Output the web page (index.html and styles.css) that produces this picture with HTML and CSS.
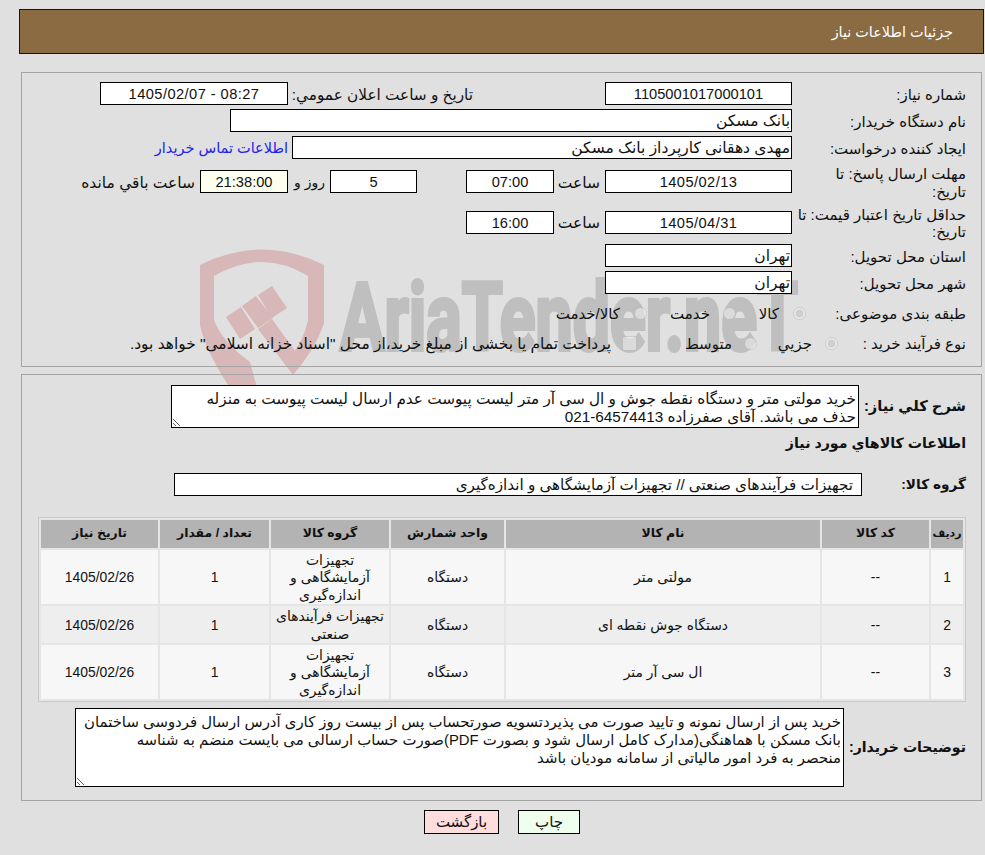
FILE: index.html
```html
<!DOCTYPE html>
<html lang="fa" dir="rtl">
<head>
<meta charset="utf-8">
<title>جزئیات اطلاعات نیاز</title>
<link rel="stylesheet" href="styles.css">
</head>
<body>
<svg class="watermark" viewBox="0 0 985 855" width="985" height="855" aria-hidden="true">
  <path class="wm-shield" d="M200 265 Q262 234 324 265 L324 323 Q316 348 293 375 L286 362 Q304 342 308 320 L308 276 Q262 248 214 276 L214 320 Q222 342 250 362 L257 388 L230 388 Q205 350 200 325 Z"/>
  <path class="wm-shield" d="M226 317 L241 307 L255 329 L240 339 Z M242 306 L256 296 L273 318 L258 328 Z M258 295 L272 286 L287 308 L272 318 Z M258 329 L272 319 L298 355 L293 375 Z"/>
  <text class="wm-text" x="340" y="350" textLength="458" lengthAdjust="spacingAndGlyphs">AriaTender.neT</text>
</svg>

<header class="title-bar">جزئیات اطلاعات نیاز</header>

<section class="panel panel-info">
  <div class="row row-h23">
    <div class="label">شماره نیاز:</div>
    <div class="field w187 center num" dir="ltr">1105001017000101</div>
    <div class="label label-announce">تاریخ و ساعت اعلان عمومي:</div>
    <div class="field w188 center num spaced" dir="ltr">1405/02/07 - 08:27</div>
  </div>
  <div class="row row-h23">
    <div class="label">نام دستگاه خریدار:</div>
    <div class="field w562">بانک مسکن</div>
  </div>
  <div class="row row-h23">
    <div class="label">ایجاد کننده درخواست:</div>
    <div class="field w500">مهدی دهقانی کارپرداز بانک مسکن</div>
    <a class="contact" href="#">اطلاعات تماس خریدار</a>
  </div>
  <div class="row row-h37">
    <div class="label">مهلت ارسال پاسخ: تا<br>تاریخ:</div>
    <div class="field w187 center num spaced" dir="ltr">1405/02/13</div>
    <div class="time-label">ساعت</div>
    <div class="field w88 center num" dir="ltr">07:00</div>
    <div class="field w87 center num days">5</div>
    <div class="days-label">روز و</div>
    <div class="field w88 center num remain" dir="ltr">21:38:00</div>
    <div class="remain-label">ساعت باقي مانده</div>
  </div>
  <div class="row row-h36">
    <div class="label">حداقل تاریخ اعتبار قیمت: تا<br>تاریخ:</div>
    <div class="field w187 center num spaced" dir="ltr">1405/04/31</div>
    <div class="time-label">ساعت</div>
    <div class="field w88 center num" dir="ltr">16:00</div>
  </div>
  <div class="row row-h23">
    <div class="label">استان محل تحویل:</div>
    <div class="field w187">تهران</div>
  </div>
  <div class="row row-h23">
    <div class="label">شهر محل تحویل:</div>
    <div class="field w187">تهران</div>
  </div>
  <div class="row row-h30">
    <div class="label label-cat">طبقه بندی موضوعی:</div>
    <label class="choice c-kala"><input type="radio" name="cat" checked disabled><span>کالا</span></label>
    <label class="choice c-khedmat"><input type="radio" name="cat" disabled><span>خدمت</span></label>
    <label class="choice c-both"><input type="radio" name="cat" disabled><span>کالا/خدمت</span></label>
  </div>
  <div class="row row-h22">
    <div class="label label-process">نوع فرآیند خرید :</div>
    <label class="choice c-small"><input type="radio" name="proc" checked disabled><span>جزيي</span></label>
    <label class="choice c-medium"><input type="radio" name="proc" disabled><span>متوسط</span></label>
    <label class="choice c-pay"><input type="checkbox" disabled><span>پرداخت تمام یا بخشی از مبلغ خرید،از محل "اسناد خزانه اسلامی" خواهد بود.</span></label>
  </div>
</section>

<section class="panel panel-goods">
  <div class="desc-row">
    <div class="label-bold desc-label">شرح کلي نیاز:</div>
    <textarea class="area area-need" readonly>خرید مولتی متر و دستگاه نقطه جوش و ال سی آر متر لیست پیوست عدم ارسال لیست پیوست به منزله
حذف می باشد. آقای صفرزاده 64574413-021</textarea>
  </div>
  <h2 class="goods-title">اطلاعات کالاهاي مورد نیاز</h2>
  <div class="group-row">
    <div class="label-bold group-label">گروه کالا:</div>
    <div class="field group-field">تجهیزات فرآیندهای صنعتی // تجهیزات آزمایشگاهی و اندازه‌گیری</div>
  </div>
  <table class="goods">
    <colgroup>
      <col class="col-1"><col class="col-2"><col class="col-3"><col class="col-4"><col class="col-5"><col class="col-6"><col class="col-7">
    </colgroup>
    <thead>
      <tr><th>ردیف</th><th>کد کالا</th><th>نام کالا</th><th>واحد شمارش</th><th>گروه کالا</th><th>تعداد / مقدار</th><th>تاریخ نیاز</th></tr>
    </thead>
    <tbody>
      <tr><td>1</td><td>--</td><td>مولتی متر</td><td>دستگاه</td><td>تجهیزات آزمایشگاهی و اندازه‌گیری</td><td>1</td><td>1405/02/26</td></tr>
      <tr><td>2</td><td>--</td><td>دستگاه جوش نقطه ای</td><td>دستگاه</td><td>تجهیزات فرآیندهای صنعتی</td><td>1</td><td>1405/02/26</td></tr>
      <tr><td>3</td><td>--</td><td>ال سی آر متر</td><td>دستگاه</td><td>تجهیزات آزمایشگاهی و اندازه‌گیری</td><td>1</td><td>1405/02/26</td></tr>
    </tbody>
  </table>
  <div class="notes-row">
    <div class="label-bold notes-label">توضیحات خریدار:</div>
    <textarea class="area area-notes" readonly>خرید پس از ارسال نمونه و تایید صورت می پذیردتسویه صورتحساب پس از بیست روز کاری آدرس ارسال فردوسی ساختمان
بانک مسکن با هماهنگی(مدارک کامل ارسال شود و بصورت PDF)صورت حساب ارسالی می بایست منضم به شناسه
منحصر به فرد امور مالیاتی از سامانه مودیان باشد</textarea>
  </div>
</section>

<div class="actions">
  <button class="btn btn-print" type="button">چاپ</button>
  <button class="btn btn-back" type="button">بازگشت</button>
</div>
</body>
</html>
```
FILE: styles.css
```css
* { box-sizing: border-box; }
html { background: #e0e0e0; }
body {
  margin: 0;
  height: 855px;
  overflow: hidden;
  position: relative;
  font-family: "Liberation Sans", "DejaVu Sans", sans-serif;
  font-size: 15px;
  line-height: 17.4px;
  color: #111;
}
.watermark { position: absolute; left: 0; top: 0; z-index: -1; }
.wm-shield { fill: #d7b7b7; }
.wm-text {
  font-family: Roboto, sans-serif;
  font-weight: 700;
  font-size: 94px;
  fill: #bfbfbf;
  stroke: #bfbfbf;
  stroke-width: 4px;
  direction: ltr;
}
.title-bar {
  width: 965px;
  height: 45px;
  margin-top: 9px;
  margin-inline-start: 1px;
  padding: 2px 30px 0;
  background: #8b6b42;
  border: 1px solid #1c1407;
  color: #fff;
  font-size: 14.4px;
  display: flex;
  align-items: center;
}
.panel {
  width: 961px;
  margin-inline-start: 3px;
  border: 1px solid #a4a4a4;
}
.panel-info {
  margin-top: 18px;
  height: 295px;
  padding: 9px 15px 0 0;
  display: flex;
  flex-direction: column;
  gap: 4px;
}
.panel-goods {
  margin-top: 7px;
  height: 427px;
  padding: 10px 15px 0 15px;
}
.row { display: flex; align-items: center; }
.row-h23 { height: 23px; }
.row-h37 { height: 37px; }
.row-h36 { height: 36px; }
.row-h30 { height: 30px; }
.row-h22 { height: 22px; }
.label { width: 174px; flex: none; padding-top: 2px; white-space: nowrap; }
.field {
  height: 23px;
  flex: none;
  border: 1px solid #000;
  background: #fff;
  padding: 1px 1px 0;
  font-size: 15.5px;
  line-height: 20px;
  white-space: nowrap;
}
.num { font-size: 14.67px; }
.spaced { letter-spacing: .43px; }
.center { text-align: center; }
.w187 { width: 187px; }
.w188 { width: 188px; }
.w88 { width: 88px; }
.w87 { width: 87px; }
.w500 { width: 500px; }
.w562 { width: 562px; }
.label-announce { margin-inline-start: 132px; width: 185px; font-size: 15.3px; }
.contact { margin-inline-start: 4px; padding-top: 2px; color: #2222ee; font-size: 14.5px; text-decoration: none; }
.time-label { width: 51px; padding-top: 2px; padding-inline-start: 5px; font-size: 15.5px; }
.days { margin-inline-start: 49px; }
.days-label { width: 42px; padding-top: 2px; padding-inline-start: 5px; font-size: 14px; }
.remain { background: #fffff0; }
.remain-label { padding-top: 2px; padding-inline-start: 5px; font-size: 15.5px; white-space: nowrap; }
.choice { display: flex; align-items: center; white-space: nowrap; flex: none; }
.choice span { padding-top: 2px; }
.choice input { margin: 0; flex: none; width: 13px; height: 13px; opacity: .75; }
.label-cat { width: 160px; }
.c-kala { width: 70px; gap: 14px; }
.c-khedmat { width: 89px; gap: 13px; }
.c-both { gap: 14px; }
.label-process { width: 128px; }
.c-small { width: 81px; gap: 13px; }
.c-medium { width: 120px; gap: 12px; }
.c-pay { gap: 11px; font-size: 15.45px; }
.c-pay input { width: 15px; height: 15px; }
.label-bold { flex: none; font-weight: 700; font-size: 14.2px; white-space: nowrap; }
.desc-row { display: flex; align-items: center; height: 43px; }
.desc-label { width: 107px; font-size: 14.7px; }
.area {
  flex: none;
  display: block;
  font: inherit;
  color: inherit;
  line-height: 18px;
  border: 1px solid #000;
  border-radius: 0;
  background: #fff;
  padding: 3px 2px 0;
  margin: 0;
  overflow: hidden;
  outline: none;
}
.area-need { width: 688px; height: 43px; padding-top: 4px; font-size: 15.25px; }
.goods-title { margin: 7px 0 0; font-size: 14.2px; line-height: 17px; font-weight: 700; height: 17px; }
.group-row { display: flex; align-items: center; margin-top: 21px; height: 23px; }
.group-label { width: 104px; font-size: 13.7px; }
.group-field { width: 688px; padding-inline-start: 8px; font-size: 15.2px; }
.goods {
  width: 928px;
  margin-top: 21px;
  table-layout: fixed;
  border-collapse: separate;
  border-spacing: 2px;
  border: 1px solid #c9c9c9;
  background: #e5e5e5;
  text-align: center;
}
.col-1 { width: 32px; }
.col-2 { width: 107px; }
.col-3 { width: 314px; }
.col-4 { width: 113px; }
.col-5 { width: 118px; }
.col-6 { width: 109px; }
.col-7 { width: 117px; }
.goods th {
  height: 28px;
  padding: 0 2px;
  background: #b3b3b3;
  font-size: 12.4px;
  font-weight: 700;
}
.goods th:first-child { padding: 0; font-size: 11px; }
.goods td { padding: 2px 2px 0; background: #f7f7f7; font-size: 13.9px; }
.goods tbody tr:nth-child(2) td { background: #eeeeee; }
.notes-row { display: flex; align-items: center; margin-top: 6px; height: 79px; }
.notes-label { width: 122px; font-size: 14.1px; }
.area-notes { width: 769px; height: 79px; padding-top: 4px; font-size: 14.9px; }
.actions {
  display: flex;
  margin-top: 9px;
  padding-inline-start: 405px;
  gap: 19px;
}
.btn {
  height: 24px;
  border: 1px solid #000;
  border-radius: 0;
  padding: 0;
  font: inherit;
  color: #111;
  cursor: pointer;
}
.btn-print { width: 62px; background: #eeffee; }
.btn-back { width: 75px; background: #ffdddd; }
```
